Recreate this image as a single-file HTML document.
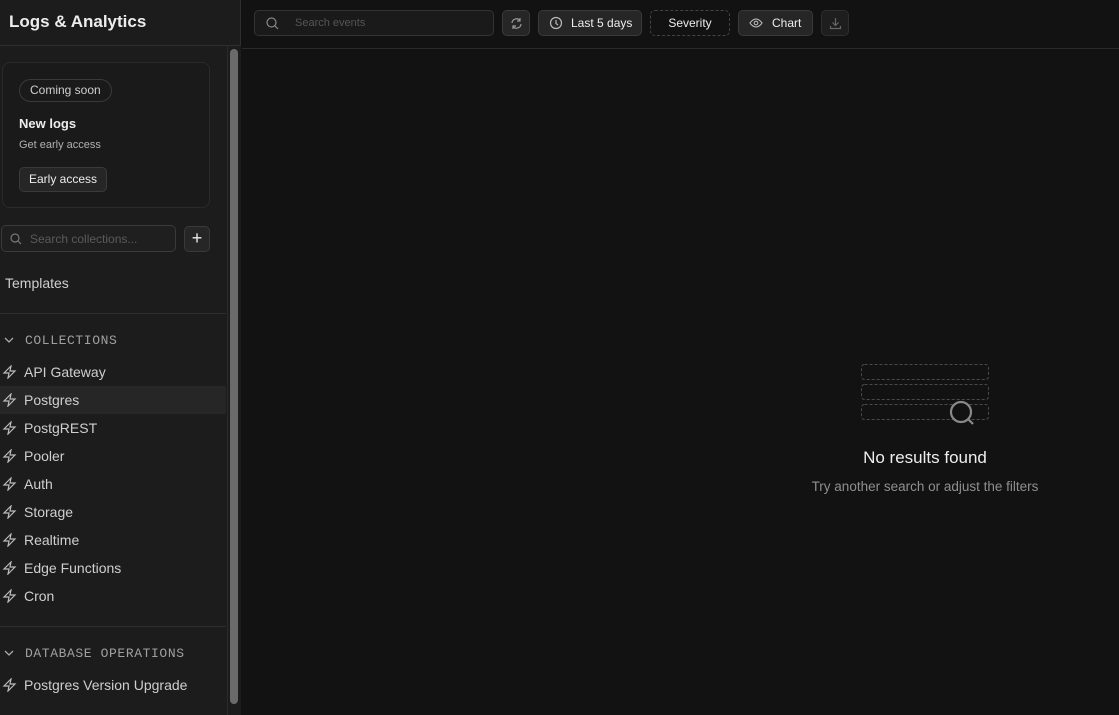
<!DOCTYPE html><html><head><style>
*{box-sizing:border-box;margin:0;padding:0}
body{width:1119px;height:715px;overflow:hidden;background:#121212;font-family:"Liberation Sans",sans-serif;color:#ededed;position:relative}
.sb{position:absolute;left:0;top:0;width:241px;height:715px;background:#1c1c1c;border-right:1px solid #2e2e2e}
.hd{height:46px;border-bottom:1px solid #2e2e2e;padding:12px 9px;font-size:17px;font-weight:bold;width:241px}
.track{position:absolute;left:227px;top:46px;width:14px;height:669px;background:#1c1c1c;border-left:1px solid #2a2a2a}
.thumb{position:absolute;left:230px;top:49px;width:8px;height:655px;background:#6a6a6a;border-radius:4px}
.card{position:absolute;left:2px;top:62px;width:208px;height:146px;border:1px solid #2a2a2a;border-radius:8px;background:#1a1a1a}
.pill{position:absolute;left:16px;top:16px;height:23px;padding:0 10px;border:1px solid #3a3a3a;border-radius:12px;font-size:12px;line-height:21px;color:#cfcfcf}
.btn{border:1px solid #3a3a3a;background:#262626;border-radius:5px;font-size:12px;color:#ededed}
.item{position:absolute;left:0;width:226px;height:28px;font-size:14px;color:#cfcfcf;line-height:28px;padding-left:24px}
.item svg{position:absolute;left:2px;top:7px}
.sec{position:absolute;left:25px;font-family:"Liberation Mono",monospace;font-size:13px;color:#a0a0a0;letter-spacing:0.6px}
.chev{position:absolute;left:4px;width:10px;height:10px}
.div{position:absolute;left:0;width:226px;height:1px;background:#2e2e2e}
.tb{position:absolute;left:242px;top:0;right:0;height:49px;border-bottom:1px solid #2a2a2a}
.t{position:absolute;top:10px;height:26px;border-radius:5px;font-size:12px;line-height:24px}
</style></head><body>
<div class="sb">
<div class="hd">Logs &amp; Analytics</div>
<div class="card">
<div class="pill">Coming soon</div>
<div style="position:absolute;left:16px;top:53px;font-size:13px;font-weight:bold">New logs</div>
<div style="position:absolute;left:16px;top:76px;font-size:11px;color:#b0b0b0">Get early access</div>
<div class="btn" style="position:absolute;left:16px;top:104px;width:88px;height:25px;line-height:23px;text-align:center">Early access</div>
</div>
<div style="position:absolute;left:1px;top:225px;width:175px;height:27px;border:1px solid #3a3a3a;border-radius:5px;background:#1f1f1f">
<svg style="position:absolute;left:8px;top:7px" width="12" height="12" viewBox="0 0 12 12" fill="none" stroke="#777" stroke-width="1.2"><circle cx="5" cy="5" r="4"/><path d="M8 8l3 3"/></svg>
<span style="position:absolute;left:28px;top:6px;font-size:12px;color:#5a5a5a">Search collections...</span></div>
<div class="btn" style="position:absolute;left:184px;top:226px;width:26px;height:26px;text-align:center;line-height:22px;font-size:18px">+</div>
<div style="position:absolute;left:5px;top:275px;font-size:14px;color:#cfcfcf">Templates</div>
<div class="div" style="top:313px"></div>
<svg class="chev" style="top:335px" viewBox="0 0 10 10" fill="none" stroke="#aaa" stroke-width="1.3"><path d="M1 3l4 4 4-4"/></svg>
<div class="sec" style="top:333px">COLLECTIONS</div>
<div class="item" style="top:358px">API Gateway<svg width="16" height="14" viewBox="0 0 16 14" fill="none" stroke="#bbb" stroke-width="1.2"><path d="M9 1L2 8h5l-1 5 7-7H8z"/></svg></div>
<div class="item" style="top:386px;background:#262626">Postgres<svg width="16" height="14" viewBox="0 0 16 14" fill="none" stroke="#bbb" stroke-width="1.2"><path d="M9 1L2 8h5l-1 5 7-7H8z"/></svg></div>
<div class="item" style="top:414px">PostgREST<svg width="16" height="14" viewBox="0 0 16 14" fill="none" stroke="#bbb" stroke-width="1.2"><path d="M9 1L2 8h5l-1 5 7-7H8z"/></svg></div>
<div class="item" style="top:442px">Pooler<svg width="16" height="14" viewBox="0 0 16 14" fill="none" stroke="#bbb" stroke-width="1.2"><path d="M9 1L2 8h5l-1 5 7-7H8z"/></svg></div>
<div class="item" style="top:470px">Auth<svg width="16" height="14" viewBox="0 0 16 14" fill="none" stroke="#bbb" stroke-width="1.2"><path d="M9 1L2 8h5l-1 5 7-7H8z"/></svg></div>
<div class="item" style="top:498px">Storage<svg width="16" height="14" viewBox="0 0 16 14" fill="none" stroke="#bbb" stroke-width="1.2"><path d="M9 1L2 8h5l-1 5 7-7H8z"/></svg></div>
<div class="item" style="top:526px">Realtime<svg width="16" height="14" viewBox="0 0 16 14" fill="none" stroke="#bbb" stroke-width="1.2"><path d="M9 1L2 8h5l-1 5 7-7H8z"/></svg></div>
<div class="item" style="top:554px">Edge Functions<svg width="16" height="14" viewBox="0 0 16 14" fill="none" stroke="#bbb" stroke-width="1.2"><path d="M9 1L2 8h5l-1 5 7-7H8z"/></svg></div>
<div class="item" style="top:582px">Cron<svg width="16" height="14" viewBox="0 0 16 14" fill="none" stroke="#bbb" stroke-width="1.2"><path d="M9 1L2 8h5l-1 5 7-7H8z"/></svg></div>
<div class="div" style="top:626px"></div>
<svg class="chev" style="top:648px" viewBox="0 0 10 10" fill="none" stroke="#aaa" stroke-width="1.3"><path d="M1 3l4 4 4-4"/></svg>
<div class="sec" style="top:646px">DATABASE OPERATIONS</div>
<div class="item" style="top:671px">Postgres Version Upgrade<svg width="16" height="14" viewBox="0 0 16 14" fill="none" stroke="#bbb" stroke-width="1.2"><path d="M9 1L2 8h5l-1 5 7-7H8z"/></svg></div>
<div class="track"></div><div class="thumb"></div>
</div>
<div class="tb">
<div class="t" style="left:12px;width:240px;border:1px solid #333;background:#1a1a1a">
<svg style="position:absolute;left:11px;top:6px" width="13" height="13" viewBox="0 0 13 13" fill="none" stroke="#888" stroke-width="1.2"><circle cx="5.5" cy="5.5" r="4.5"/><path d="M9 9l3 3"/></svg>
<span style="position:absolute;left:40px;color:#555;font-size:11px">Search events</span></div>
<div class="t btn" style="left:260px;width:28px"><svg style="position:absolute;left:7px;top:6px" width="13" height="13" viewBox="0 0 13 13" fill="none" stroke="#999" stroke-width="1.2"><path d="M2 6a4.5 4.5 0 0 1 8-2.5M11 7a4.5 4.5 0 0 1-8 2.5M10 1v3h-3M3 12V9h3"/></svg></div>
<div class="t btn" style="left:296px;width:104px"><svg style="position:absolute;left:10px;top:5px" width="14" height="14" viewBox="0 0 14 14" fill="none" stroke="#bbb" stroke-width="1.2"><circle cx="7" cy="7" r="5.5"/><path d="M7 4v3.5l2 1.5"/></svg><span style="position:absolute;left:32px">Last 5 days</span></div>
<div class="t" style="left:408px;width:80px;border:1px dashed #444;text-align:center">Severity</div>
<div class="t btn" style="left:496px;width:75px"><svg style="position:absolute;left:10px;top:6px" width="14" height="12" viewBox="0 0 14 12" fill="none" stroke="#bbb" stroke-width="1.1"><path d="M1 6s2.5-4 6-4 6 4 6 4-2.5 4-6 4-6-4-6-4z"/><circle cx="7" cy="6" r="1.8"/></svg><span style="position:absolute;left:33px">Chart</span></div>
<div class="t btn" style="left:579px;width:28px;background:#1e1e1e;border-color:#2e2e2e"><svg style="position:absolute;left:7px;top:6px" width="13" height="13" viewBox="0 0 13 13" fill="none" stroke="#666" stroke-width="1.2"><path d="M6.5 1v7M3.5 5.5l3 3 3-3M1.5 9v2.5h10V9"/></svg></div>
</div>
<svg style="position:absolute;left:860px;top:363px" width="131" height="62" viewBox="0 0 131 62" fill="none" stroke="#4a4a4a" stroke-dasharray="3 2"><rect x="1.5" y="1.5" width="127" height="15" rx="3"/><rect x="1.5" y="21.5" width="127" height="15" rx="3"/><rect x="1.5" y="41.5" width="127" height="15" rx="3"/></svg>
<svg style="position:absolute;left:948px;top:399px" width="28" height="28" viewBox="0 0 28 28" fill="none" stroke="#8a8a8a" stroke-width="2.2"><circle cx="13" cy="13" r="10" fill="#121212"/><path d="M20 20l5 5"/></svg>
<div style="position:absolute;left:805px;width:240px;top:448px;text-align:center;font-size:17px">No results found</div>
<div style="position:absolute;left:780px;width:290px;top:479px;text-align:center;font-size:13.5px;color:#8f8f8f">Try another search or adjust the filters</div>
</body></html>
